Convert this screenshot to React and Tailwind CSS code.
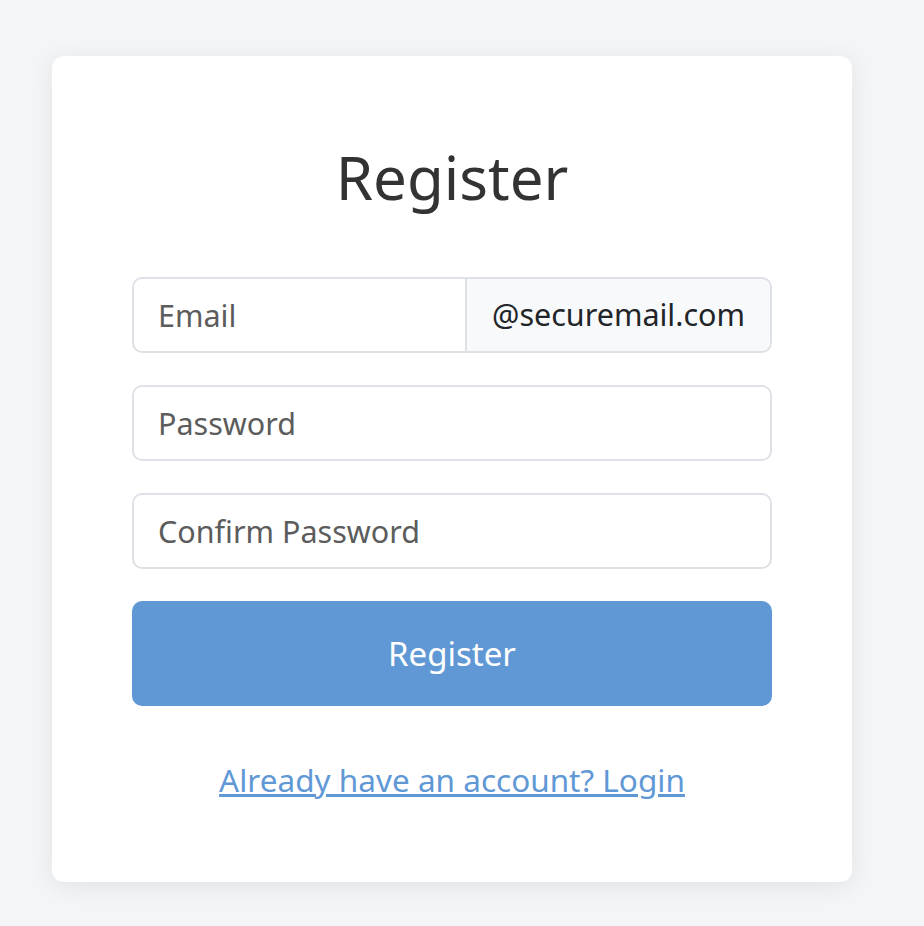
import React, { useState } from "react";

export default function App() {
  const [form, setForm] = useState({ email: "", password: "", confirm: "" });

  const inputCls =
    "w-full h-[76px] rounded-[10px] border-2 border-[#dee2e6] bg-white px-6 text-[30.5px] text-[#212529] placeholder:text-[#5c5c5c] outline-none";

  return (
    <div
      className="min-h-[926px] bg-[#f4f5f7] pt-14 px-[52px]"
      style={{ fontFamily: '"Noto Sans", "Open Sans", sans-serif' }}
    >
      <div className="w-[800px] rounded-xl bg-white px-20 pt-[83px] pb-[78px] shadow-[0_4px_24px_rgba(0,0,0,0.08)]">
        <h1 className="text-center text-[60px] leading-[77px] font-normal text-[#333333]">
          Register
        </h1>

        <form className="mt-[61px] flex flex-col gap-8" onSubmit={(e) => e.preventDefault()}>
          <div className="flex h-[76px]">
            <input
              type="text"
              placeholder="Email"
              className="h-full flex-1 min-w-0 rounded-l-[10px] border-2 border-[#dee2e6] bg-white px-6 text-[30.5px] text-[#212529] placeholder:text-[#5c5c5c] outline-none"
              value={form.email}
              onChange={(e) => setForm({ ...form, email: e.target.value })}
            />
            <span className="flex h-full w-[305px] items-center justify-center rounded-r-[10px] border-2 border-l-0 border-[#dee2e6] bg-[#f8f9fa] text-[30.5px] text-[#212529]">
              @securemail.com
            </span>
          </div>
          <input
            type="password"
            placeholder="Password"
            className={inputCls}
            value={form.password}
            onChange={(e) => setForm({ ...form, password: e.target.value })}
          />
          <input
            type="password"
            placeholder="Confirm Password"
            className={inputCls}
            value={form.confirm}
            onChange={(e) => setForm({ ...form, confirm: e.target.value })}
          />
          <button
            type="submit"
            className="h-[105px] w-full rounded-[10px] bg-[#6098d6] text-[33px] text-white"
          >
            Register
          </button>
        </form>

        <div className="mt-[50px] text-center">
          <a href="#" className="text-[31.5px] leading-[48px] text-[#6098d6] underline">
            Already have an account? Login
          </a>
        </div>
      </div>
    </div>
  );
}
